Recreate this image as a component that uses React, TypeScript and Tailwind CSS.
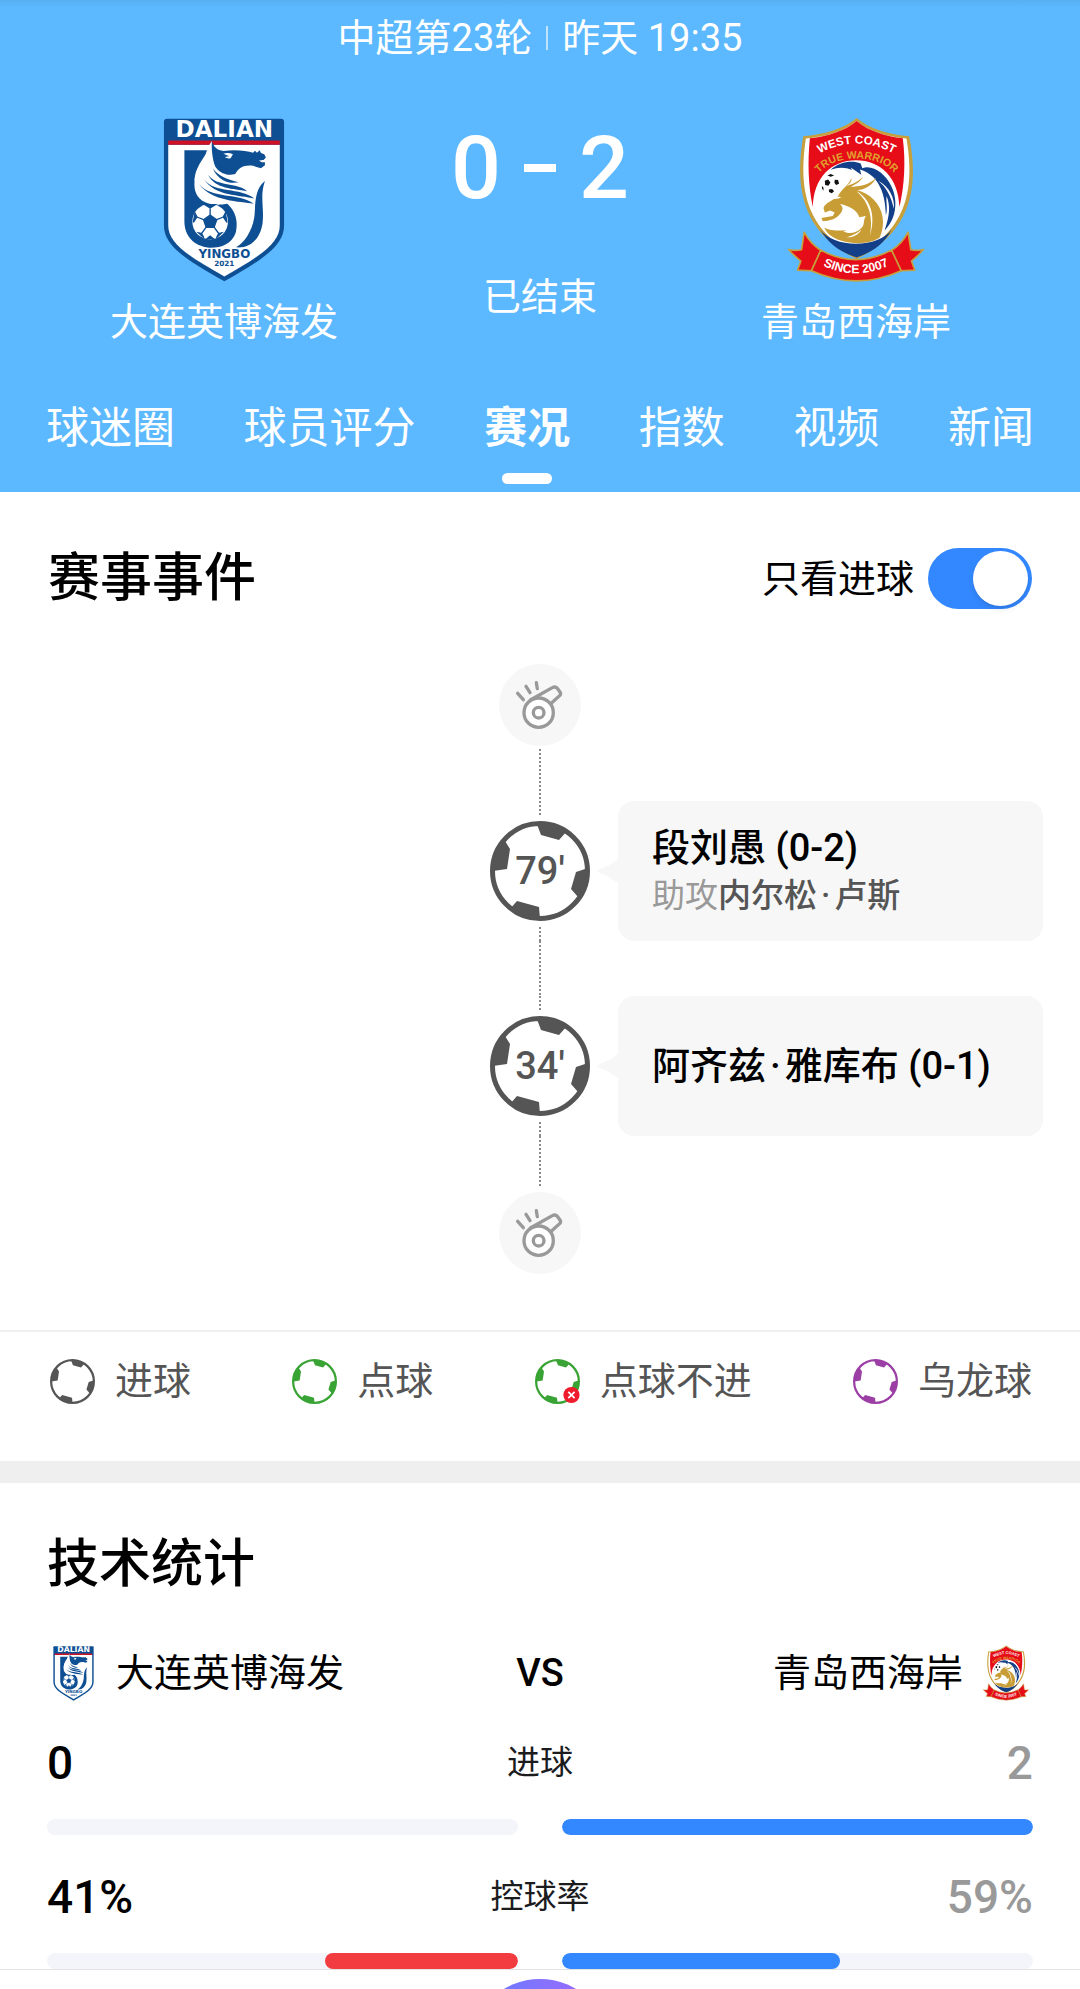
import { useState } from "react";

function DalianCrest({ className }: { className: string }) {
  return (
    <svg viewBox="68 52 368 497" className={"overflow-visible " + className} role="img" aria-label="大连英博海发">
      <path d="M80 54H424Q434 54 434 64V378C434 440 370 480 253 547C135 480 70 440 70 378V64Q70 54 80 54Z" fill="#0e4f93" />
      <path d="M83 133H421V378C421 432 362 470 253 532C143 470 83 432 83 378Z" fill="#fff" />
      <path d="M83 120H421V133H83Z" fill="#cf1126" />
      <text x="253" y="109" textAnchor="middle" fontFamily="DejaVu Sans" fontWeight="bold" fontSize="70" fill="#fff">DALIAN</text>
      <path d="M132 150H204C190 175 163 205 163 240C161 262 163 285 185 302C210 318 240 316 262 312C285 332 296 362 288 398C276 434 243 446 207 445C160 441 132 408 132 366Z" fill="#0e4f93" />
      <path d="M215 122C221 140 232 151 250 152C290 147 320 152 340 157L346 151L352 157L360 150L364 158L374 162L379 172L372 179L358 181L366 186H376V195L364 204L340 197C312 193 296 204 286 222C266 228 243 221 230 205C214 185 208 150 215 122Z" fill="#0e4f93" />
      <path d="M250 160Q266 155 279 162L272 174Q262 176 254 170L268 168Z" fill="#fff" />
      <g fill="#fff">
        <path d="M215 122C196 150 188 185 196 212C204 234 224 246 256 252C242 236 212 200 215 122Z" />
        <path d="M190 182C180 220 196 246 226 260C256 272 300 270 336 290C300 256 224 260 190 182Z" />
        <path d="M172 205C168 250 200 276 240 284C280 288 320 296 344 314C310 268 210 286 172 205Z" />
        <path d="M163 232C162 275 200 296 245 302C280 304 310 308 340 318C300 286 200 306 163 232Z" />
        <path d="M163 266C175 300 215 306 262 312C236 296 190 300 163 266Z" />
      </g>
      <g fill="#0e4f93">
        <path d="M218 205C236 228 262 238 297 247C272 252 236 246 218 205Z" />
        <path d="M204 225C232 262 290 246 322 274C280 266 226 268 204 225Z" />
        <path d="M192 238C226 282 300 260 344 296C300 284 226 290 192 238Z" />
        <path d="M176 252C216 300 296 276 342 312C300 304 216 306 176 252Z" />
        <path d="M376 243C343 268 348 318 344 352C336 400 312 430 288 444C332 448 362 418 369 370C374 320 360 290 376 243Z" />
      </g>
      <circle cx="210" cy="366" r="54" fill="#fff" />
      <g fill="#0e4f93" stroke="#0e4f93" strokeWidth="4">
        <path d="M210 346L230 360L222 383H198L190 360Z" />
        <path d="M210 346V326M230 360L250 352M222 383L236 402M198 383L184 402M190 360L170 352" />
        <path d="M194 315L210 325L226 315ZM256 340L250 352L261 368ZM245 400L236 402L229 415ZM175 400L184 402L191 415ZM164 340L170 352L159 368ZM200 418L210 410L220 418Z" />
      </g>
      <text x="253" y="477" textAnchor="middle" fontFamily="DejaVu Sans" fontWeight="bold" fontSize="36" fill="#0e4f93">YINGBO</text>
      <text x="253" y="500" textAnchor="middle" fontFamily="DejaVu Sans" fontWeight="bold" fontSize="22" fill="#0e4f93">2021</text>
    </svg>
  );
}

function WestCoastCrest({ className, id }: { className: string; id: string }) {
  return (
    <svg viewBox="54 57 412 494" className={className} role="img" aria-label="青岛西海岸">
      <defs>
        <path id={id + "-top"} d="M132 174Q262 94 392 174" />
        <path id={id + "-mid"} d="M136 242C176 158 348 158 388 242" />
        <path id={id + "-low"} d="M146 494Q258 556 374 494" />
      </defs>
      <path d="M262 57C222 92 160 106 101 112C76 260 92 400 262 482C430 400 450 260 420 112C362 106 302 92 262 57Z" fill="#c79f3b" />
      <path d="M262 66C222 100 166 113 109 119C88 260 102 392 262 472C420 392 436 260 412 119C358 113 302 100 262 66Z" fill="#fff" />
      <path d="M262 66C224 98 174 112 121 118C114 190 116 260 130 325C132 236 186 184 260 184C334 184 388 236 391 325C406 260 410 190 401 118C350 112 300 98 262 66Z" fill="#e60c18" />
      <path d="M152 392C190 450 330 450 368 392C348 432 310 462 262 477C212 462 174 432 152 392Z" fill="#123f87" />
      <text fontFamily="Liberation Sans" fontWeight="bold" fontSize="35" fill="#fff" textAnchor="middle">
        <textPath href={"#" + id + "-top"} startOffset="50%">WEST COAST</textPath>
      </text>
      <text fontFamily="Liberation Sans" fontWeight="bold" fontSize="32" fill="#e0a12e" textAnchor="middle">
        <textPath href={"#" + id + "-mid"} startOffset="50%">TRUE WARRIOR</textPath>
      </text>
      <path d="M184 213C210 188 250 184 274 194L279 208C310 196 350 226 366 262C390 310 378 366 346 396C362 350 364 320 352 292C350 312 356 330 350 350C348 270 320 226 272 212L276 228L244 206L248 214C226 204 204 206 184 213Z" fill="#123f87" />
      <path d="M326 246C360 262 378 300 374 330C366 296 352 264 326 246Z" fill="#fff" />
      <circle cx="184" cy="252" r="27" fill="#fff" />
      <path d="M166 246L176 242L183 251L177 261L167 259ZM196 243L206 244L209 255L200 259L195 252ZM178 272L188 271L194 278L187 284L179 280ZM174 230L184 226L194 230L184 234ZM157 262L162 266L162 276L158 270Z" fill="#111" />
      <path d="M246 238C238 262 218 268 206 292C190 306 168 312 162 328L166 342L182 336L196 342L190 352L156 358L160 368C180 366 200 362 212 346C222 334 222 326 212 316C240 322 264 334 270 356L290 352C280 366 288 378 276 388C262 404 236 408 222 398L232 394C204 398 176 396 164 386C178 420 220 432 262 434C290 434 318 428 332 416C350 376 342 330 312 302C300 288 282 280 264 274C290 272 310 258 322 236C300 258 270 264 244 264C262 256 276 246 280 234C266 250 248 256 232 262C242 254 248 248 246 238Z" fill="#c99d35" />
      <path d="M262 278C306 302 320 356 302 412C312 356 300 312 262 278ZM186 300Q200 290 216 296Q204 304 186 300ZM276 392C270 408 250 418 232 416C252 410 264 404 276 392Z" fill="#fff" />
      <path d="M212 346C232 350 250 358 258 374C250 388 226 394 204 386C188 380 184 372 190 364C200 362 208 356 212 346Z" fill="#fff" />
      <g fill="#e60c18" stroke="#c79f3b" strokeWidth="5" strokeLinejoin="round">
        <path d="M57 453Q78 458 96 454L104 401Q122 436 154 456L126 517L84 515L94 488Q76 474 57 453Z" />
        <path d="M463 453Q443 458 425 454L417 401Q399 436 367 456L395 517L437 515L427 488Q445 474 463 453Z" />
        <path d="M154 455Q258 512 367 455L396 517Q262 578 126 517Z" />
      </g>
      <text fontFamily="Liberation Sans" fontWeight="bold" fontSize="37" fill="#fff" textAnchor="middle">
        <textPath href={"#" + id + "-low"} startOffset="50%">SINCE 2007</textPath>
      </text>
    </svg>
  );
}

function BallIcon({ className, missed = false }: { className: string; missed?: boolean }) {
  return (
    <svg viewBox="0 0 100 100" className={className} aria-hidden="true">
      <circle cx="50" cy="50" r="47.5" fill="#fff" stroke="currentColor" strokeWidth="5" />
      <g fill="currentColor">
        <path d="M46 2L48 6L51 14L69 19L77 10A48 48 0 0 0 46 2Z" />
        <path d="M15 20L20 28L17 48L3 50A48 48 0 0 1 15 17Z" />
        <path d="M98 47L86 51L81 68L88 76L92 75A48 48 0 0 0 98 47Z" />
        <path d="M50 98L49 86L27 80L20 88A48 48 0 0 0 50 98Z" />
      </g>
      {missed && (
        <g>
          <circle cx="81" cy="80" r="18" fill="#ee1c2c" />
          <path d="M74 73L88 87M88 73L74 87" stroke="#fff" strokeWidth="4" />
        </g>
      )}
    </svg>
  );
}

function Whistle() {
  return (
    <div className="flex size-[82px] items-center justify-center rounded-full bg-[#f7f7f7] text-[#999]">
      <svg viewBox="0 0 150 150" className="size-[50px]" fill="none" stroke="currentColor" strokeWidth="10" strokeLinecap="round" aria-hidden="true">
        <circle cx="71" cy="98" r="44" fill="#fff" />
        <circle cx="71" cy="98" r="16" />
        <path d="M46 60L112 23Q121 18 127 25L135 36Q139 42 134 47L112 67" />
        <path d="M8 40L25 59M33 19L45 38M64 8L67 26" />
      </svg>
    </div>
  );
}

function Line({ className }: { className: string }) {
  return <div className={"w-[2px] bg-[repeating-linear-gradient(#8a8a8a_0_2px,transparent_2px_4px)] " + className} />;
}

function PlayerName({ name }: { name: string }) {
  return name.split("·").map((part, i) => (
    <span key={part}>
      {i > 0 && <span className="mx-1">·</span>}
      {part}
    </span>
  ));
}

type MatchEvent = { minute: string; player: string; score: string; assist?: string };

function EventRow({ event }: { event: MatchEvent }) {
  return (
    <li className="grid w-full grid-cols-[1fr_100px_1fr]">
      <div />
      <div className="flex flex-col items-center">
        <Line className="mb-[6px] flex-1" />
        <div className="grid size-[100px] place-items-center text-[#555]">
          <BallIcon className="col-start-1 row-start-1 size-[100px]" />
          <span className="z-10 col-start-1 row-start-1 text-[38px] leading-none font-medium">{event.minute}</span>
        </div>
        <Line className="mt-[6px] flex-1" />
      </div>
      <div className="flex items-center pr-[37px] pl-[7px]">
        <svg viewBox="0 0 21 24" className="h-6 w-[21px] shrink-0" aria-hidden="true">
          <path d="M21 0V24Q16 21 12 18L1 13Q0 12 1 11L12 6Q16 4 21 0Z" fill="#f7f7f7" />
        </svg>
        <div className="flex min-h-[140px] flex-1 flex-col justify-center rounded-2xl bg-[#f7f7f7] pl-[34px]">
          <p className="text-[38px] leading-[50px] font-medium whitespace-nowrap">
            <PlayerName name={event.player} /> ({event.score})
          </p>
          {event.assist && (
            <p className="text-[33px] leading-[46px] whitespace-nowrap text-[#999]">
              助攻
              <span className="font-medium text-[#555]">
                <PlayerName name={event.assist} />
              </span>
            </p>
          )}
        </div>
      </div>
    </li>
  );
}

const tabs = ["球迷圈", "球员评分", "赛况", "指数", "视频", "新闻"];

const goals: MatchEvent[] = [
  { minute: "79'", player: "段刘愚", score: "0-2", assist: "内尔松·卢斯" },
  { minute: "34'", player: "阿齐兹·雅库布", score: "0-1" },
];

const legend = [
  { label: "进球", color: "text-[#555]", missed: false },
  { label: "点球", color: "text-[#3aa335]", missed: false },
  { label: "点球不进", color: "text-[#3aa335]", missed: true },
  { label: "乌龙球", color: "text-[#9b3fa5]", missed: false },
];

const stats = [
  { label: "进球", home: "0", away: "2", homeShare: 0, awayShare: 100 },
  { label: "控球率", home: "41%", away: "59%", homeShare: 41, awayShare: 59 },
];

export default function App() {
  const [active, setActive] = useState("赛况");
  const [goalsOnly, setGoalsOnly] = useState(true);

  return (
    <div className="bg-white font-[Roboto,'Noto_Sans_CJK_SC',sans-serif] text-black">
      <header className="bg-[#5cb9ff] bg-[linear-gradient(#57aff2,#5cb9ff_8px)] text-white">
        <p className="flex items-center justify-center gap-[14px] pt-[10px] text-[38px] leading-[56px]">
          中超第23轮
          <span className="h-6 w-[2px] bg-white/60" />
          昨天 19:35
        </p>
        <div className="grid grid-cols-3 px-[66px] pt-[52px]">
          <div className="flex flex-col items-center">
            <DalianCrest className="h-[164px] w-[122px]" />
            <p className="mt-[12px] text-[38px] leading-[56px]">大连英博海发</p>
          </div>
          <div className="flex flex-col items-center">
            <p className="flex w-full items-center justify-center gap-[23px] text-[88px] leading-[100px] font-medium">
              <span>0</span>
              <span className="h-2 w-8 bg-white" />
              <span>2</span>
            </p>
            <p className="mt-[51px] text-[38px] leading-[56px]">已结束</p>
          </div>
          <div className="flex flex-col items-center">
            <WestCoastCrest className="h-[164px] w-[138px]" id="crest-lg" />
            <p className="mt-[12px] text-[38px] leading-[56px]">青岛西海岸</p>
          </div>
        </div>
        <nav className="flex justify-between px-[46px] pt-[46px] pb-2">
          {tabs.map((tab) => (
            <button key={tab} type="button" onClick={() => setActive(tab)} className="flex flex-col items-center text-[43px] leading-[64px]">
              <span className={tab === active ? "font-bold" : "font-normal"}>{tab}</span>
              <span className={tab === active ? "mt-[13px] h-[11px] w-[50px] rounded-full bg-white" : "mt-[13px] h-[11px] w-[50px]"} />
            </button>
          ))}
        </nav>
      </header>

      <main>
        <section>
          <div className="flex items-center justify-between pt-14 pr-12 pl-12">
            <h2 className="text-[52px] leading-[61px] font-medium">赛事事件</h2>
            <label className="flex items-center gap-[14px] text-[38px] leading-[56px]">
              只看进球
              <input
                type="checkbox"
                role="switch"
                checked={goalsOnly}
                onChange={(e) => setGoalsOnly(e.target.checked)}
                className="flex h-[61px] w-[104px] appearance-none items-center rounded-full bg-gray-300 px-1 before:size-[55px] before:rounded-full before:bg-white before:shadow-md checked:justify-end checked:bg-[#3388ff]"
              />
            </label>
          </div>

          <ol className="flex flex-col items-center pt-[55px] pb-14">
            <li>
              <Whistle />
            </li>
            <Line className="mt-[3px] h-[52px]" />
            <EventRow event={goals[0]} />
            <Line className="h-[55px]" />
            <EventRow event={goals[1]} />
            <Line className="mb-1 h-[52px]" />
            <li>
              <Whistle />
            </li>
          </ol>

          <ul className="flex justify-between border-t-2 border-[#f0f0f0] pt-[21px] pr-12 pb-[51px] pl-[50px] text-[38px] leading-[57px] text-[#555]">
            {legend.map((item) => (
              <li key={item.label} className="flex items-center gap-5">
                <span className={item.color}>
                  <BallIcon className="size-[45px]" missed={item.missed} />
                </span>
                {item.label}
              </li>
            ))}
          </ul>
        </section>

        <div className="h-[22px] bg-[#efefef]" />

        <section className="px-[47px] pt-11">
          <h2 className="text-[52px] leading-[76px] font-medium">技术统计</h2>
          <div className="mt-[42px] grid grid-cols-[1fr_auto_1fr] items-center text-[38px] leading-[56px]">
            <div className="flex items-center gap-[22px] pl-[6px]">
              <DalianCrest className="h-[55px] w-[41px]" />
              大连英博海发
            </div>
            <span className="font-medium">VS</span>
            <div className="flex items-center justify-end gap-[20px] pr-[4px]">
              青岛西海岸
              <WestCoastCrest className="h-[56px] w-[46px]" id="crest-sm" />
            </div>
          </div>
          {stats.map((row) => (
            <div key={row.label} className="pt-[34px]">
              <div className="grid grid-cols-[1fr_auto_1fr] items-center text-[46px] leading-[56px] font-medium">
                <span>{row.home}</span>
                <span className="text-[33px] font-normal text-[#1c1c1f]">{row.label}</span>
                <span className="text-right text-[#999]">{row.away}</span>
              </div>
              <div className="mt-7 grid grid-cols-2 gap-11">
                <div className="flex h-4 justify-end overflow-hidden rounded-full bg-[#f4f5fa]">
                  <div className="rounded-full bg-[#f23c40]" style={{ width: row.homeShare + "%" }} />
                </div>
                <div className="flex h-4 overflow-hidden rounded-full bg-[#f4f5fa]">
                  <div className="rounded-full bg-[#3388ff]" style={{ width: row.awayShare + "%" }} />
                </div>
              </div>
            </div>
          ))}
        </section>
      </main>

      <footer className="flex h-5 justify-center overflow-hidden border-t border-[#e3e3e3] bg-white pt-[9px]">
        <div className="size-[140px] shrink-0 rounded-full bg-linear-to-r from-[#5f7dff] to-[#a066ff]" />
      </footer>
    </div>
  );
}
